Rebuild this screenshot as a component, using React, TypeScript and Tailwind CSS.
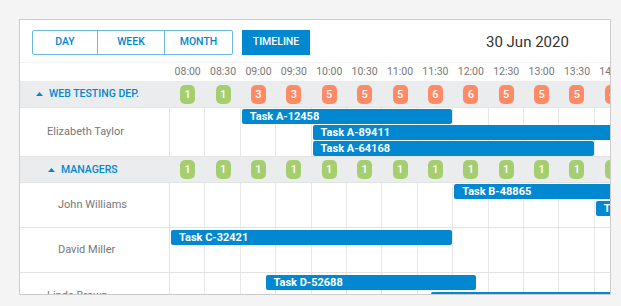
import React from 'react';

const COL = 35.4;
const BLUE = '#0288d1';

const times = [
  '08:00', '08:30', '09:00', '09:30', '10:00', '10:30', '11:00',
  '11:30', '12:00', '12:30', '13:00', '13:30', '14:00', '14:30',
];

type Task = { id: string; start: number; span: number; top: number };

type Row =
  | { kind: 'group'; name: string; indent: number; counts: number[]; height: number }
  | { kind: 'person'; name: string; indent: number; height: number; tasks: Task[] };

const rows: Row[] = [
  {
    kind: 'group',
    name: 'WEB TESTING DEP.',
    indent: 16,
    height: 27,
    counts: [1, 1, 3, 3, 5, 5, 5, 6, 6, 5, 5, 5, 4, 4],
  },
  {
    kind: 'person',
    name: 'Elizabeth Taylor',
    indent: 27,
    height: 49,
    tasks: [
      { id: 'Task A-12458', start: 2, span: 6, top: 1 },
      { id: 'Task A-89411', start: 4, span: 10, top: 17 },
      { id: 'Task A-64168', start: 4, span: 8, top: 33 },
    ],
  },
  {
    kind: 'group',
    name: 'MANAGERS',
    indent: 28,
    height: 26,
    counts: [1, 1, 1, 1, 1, 1, 1, 1, 1, 1, 1, 1, 1, 1],
  },
  {
    kind: 'person',
    name: 'John Williams',
    indent: 38,
    height: 45,
    tasks: [
      { id: 'Task B-48865', start: 8, span: 6, top: 1 },
      { id: 'Task B-21007', start: 12, span: 3, top: 18 },
    ],
  },
  {
    kind: 'person',
    name: 'David Miller',
    indent: 38,
    height: 45,
    tasks: [{ id: 'Task C-32421', start: 0, span: 8, top: 2 }],
  },
  {
    kind: 'person',
    name: 'Linda Brown',
    indent: 27,
    height: 47,
    tasks: [
      { id: 'Task D-52688', start: 2.67, span: 6, top: 2 },
      { id: 'Task D-48530', start: 7.35, span: 7, top: 19 },
    ],
  },
];

function Caret() {
  return (
    <svg width="7" height="4" viewBox="0 0 7 4" className="shrink-0">
      <path d="M0 4 L3.5 0 L7 4 Z" fill={BLUE} />
    </svg>
  );
}

function Badge({ n }: { n: number }) {
  const bg = n > 1 ? 'bg-[#ff8a65]' : 'bg-[#a5cf6f]';
  return (
    <div
      className={`w-[15px] h-[19px] rounded-[5px] ${bg} text-white text-[11px] font-medium leading-[19px] text-center`}
    >
      {n}
    </div>
  );
}

function GroupRow({ row }: { row: Extract<Row, { kind: 'group' }> }) {
  return (
    <div className="flex bg-[#ebecee] border-b border-[#e3e3e3]" style={{ height: row.height }}>
      <div className="w-[150px] shrink-0 flex items-center gap-[6px]" style={{ paddingLeft: row.indent }}>
        <Caret />
        <span className="text-[10.5px] font-medium text-[#0288d1] uppercase">{row.name}</span>
      </div>
      <div className="flex">
        {row.counts.map((n, i) => (
          <div key={i} className="w-[35.4px] shrink-0 flex items-center justify-center">
            <Badge n={n} />
          </div>
        ))}
      </div>
    </div>
  );
}

function PersonRow({ row }: { row: Extract<Row, { kind: 'person' }> }) {
  return (
    <div className="flex border-b border-[#e3e3e3]" style={{ height: row.height }}>
      <div
        className="w-[150px] shrink-0 flex items-center border-r border-[#e3e3e3] text-[11px] text-[#777]"
        style={{ paddingLeft: row.indent }}
      >
        {row.name}
      </div>
      <div className="relative flex">
        {times.map((t) => (
          <div key={t} className="w-[35.4px] shrink-0 border-r border-[#e8e8e8]" />
        ))}
        {row.tasks.map((task) => (
          <div
            key={task.id}
            className="absolute h-[15px] rounded-[2px] bg-[#0288d1] text-white text-[11px] font-bold leading-[15px] pl-[8px] whitespace-nowrap overflow-hidden"
            style={{ left: task.start * COL + 1, width: task.span * COL - 2, top: task.top }}
          >
            {task.id}
          </div>
        ))}
      </div>
    </div>
  );
}

export default function App() {
  return (
    <div className="w-[621px] h-[306px] bg-[#f4f4f4] pt-[19px] pl-[19px] font-['Roboto',sans-serif]">
      <div className="w-[592px] h-[276px] border border-[#cccccc] bg-white overflow-hidden">
        <div className="h-[43px] flex items-center pl-[12px] pt-[2px] border-b border-[#f2f2f2]">
          <div className="flex h-[25px] border border-[#6db8e6] rounded-[2px] text-[10.5px] font-medium text-[#0288d1]">
            <button className="w-[65px] border-r border-[#6db8e6]">DAY</button>
            <button className="w-[67px] border-r border-[#6db8e6]">WEEK</button>
            <button className="w-[67px]">MONTH</button>
          </div>
          <button className="ml-[9px] w-[68px] h-[25px] bg-[#0288d1] text-white text-[10.5px] font-medium">
            TIMELINE
          </button>
          <div className="ml-[176px] text-[15px] text-[#333]">30 Jun 2020</div>
        </div>
        <div className="flex h-[18px] items-center">
          <div className="w-[150px] shrink-0" />
          <div className="flex">
            {times.map((t) => (
              <div key={t} className="w-[35.4px] shrink-0 text-center text-[10.5px] text-[#777]">
                {t}
              </div>
            ))}
          </div>
        </div>
        {rows.map((row) =>
          row.kind === 'group' ? (
            <GroupRow key={row.name} row={row} />
          ) : (
            <PersonRow key={row.name} row={row} />
          )
        )}
      </div>
    </div>
  );
}
